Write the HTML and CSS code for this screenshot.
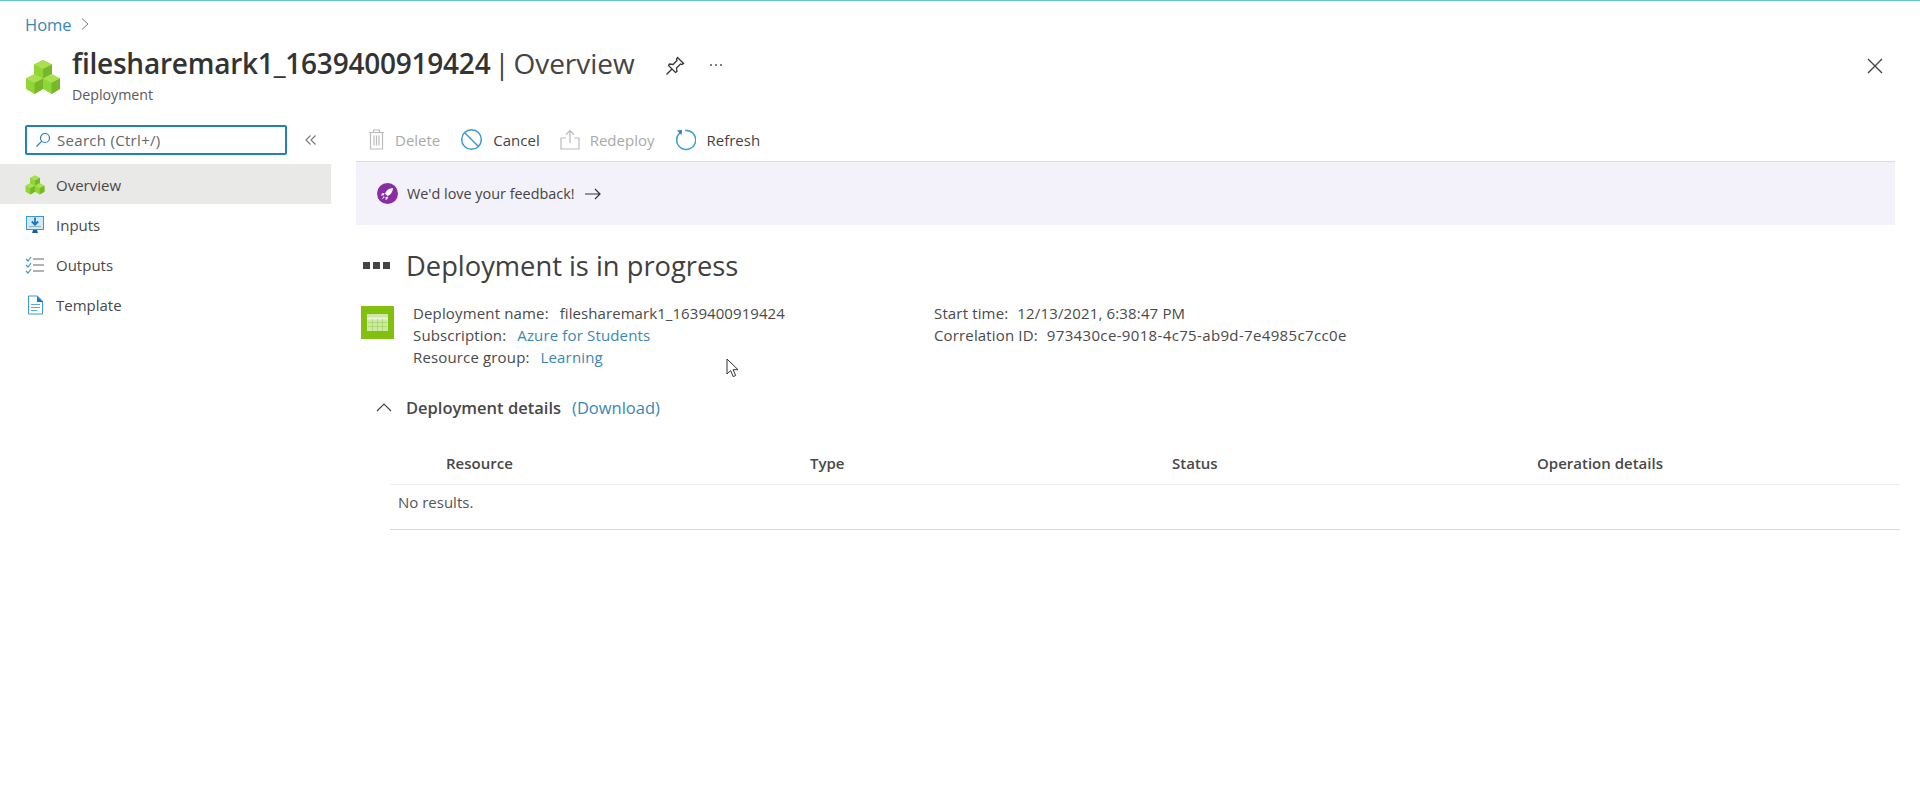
FILE: index.html
```html
<!DOCTYPE html>
<html lang="en">
<head>
<meta charset="utf-8">
<title>filesharemark1_1639400919424 | Overview</title>
<link rel="stylesheet" href="styles.css">
</head>
<body>
<div class="topline"></div>
<nav class="crumbs"><a class="link" href="#">Home</a>
<svg class="crumb-sep" width="10" height="14" viewBox="0 0 10 14"><path d="M2 1.500 8 7l-6 5.500" fill="none" stroke="#777" stroke-width="1"/></svg></nav>
<header class="blade-head">
<svg class="head-icon" width="36" height="36" viewBox="0 0 36 36">
<path d="M18 1 27 5.500v10L18 20 9 15.500v-10z" fill="#8fd636"/><path d="M18 1 27 5.500 18 10 9 5.500z" fill="#a8e04f"/><path d="M18 10v10l9-4.500v-10z" fill="#76b82a"/>
<path d="M9.500 15 18 19.500V30L9.500 35 1 30V19.500z" fill="#8fd636"/><path d="M9.500 15 18 19.500 9.500 24 1 19.500z" fill="#a8e04f"/><path d="M9.500 24V35l8.500-5V19.500z" fill="#76b82a"/>
<path d="M26.500 15 35 19.500V30l-8.500 5L18 30V19.500z" fill="#8fd636"/><path d="M26.500 15 35 19.500 26.500 24 18 19.500z" fill="#a8e04f"/><path d="M26.500 24V35l8.500-5V19.500z" fill="#76b82a"/>
</svg>
<div class="head-text">
<div class="title-row">
<h1 class="title"><strong class="title-name">filesharemark1_1639400919424</strong> <span class="title-sep">|</span> Overview</h1>
<svg class="pin" width="20" height="20" viewBox="0 0 20 20"><path d="M12.500 1.500 18.500 7.500 17 8.500 15.500 8 11.500 12l.5 3.500-1.500 1L3.500 9.500l1-1.500L8 8.500 12 4.500 11.500 3zM7 13 1.500 18.500" fill="none" stroke="#333" stroke-width="1.300"/></svg>
<span class="more"><i></i><i></i><i></i></span>
</div>
<div class="subtitle">Deployment</div>
</div>
<svg class="close" width="16" height="16" viewBox="0 0 16 16"><path d="M1 1 15 15M15 1 1 15" stroke="#444" stroke-width="1.400"/></svg>
</header>
<div class="blade-body">
<aside class="side">
<div class="search-row">
<div class="search">
<svg width="16" height="16" viewBox="0 0 16 16"><circle cx="10" cy="6" r="4.500" fill="none" stroke="#2b7cb8" stroke-width="1.200"/><path d="M6.800 9.200 1.500 14.500" stroke="#2b7cb8" stroke-width="1.200"/></svg>
<span>Search (Ctrl+/)</span>
</div>
<svg class="collapse" width="12" height="12" viewBox="0 0 12 12"><path d="M5.500 1.500 1 6l4.500 4.500M10.500 1.500 6 6l4.500 4.500" fill="none" stroke="#777" stroke-width="1.100"/></svg>
</div>
<ul class="menu">
<li class="menu-item active">
<svg width="20" height="20" viewBox="0 0 36 36">
<path d="M18 1 27 5.500v10L18 20 9 15.500v-10z" fill="#8fd636"/><path d="M18 1 27 5.500 18 10 9 5.500z" fill="#a8e04f"/><path d="M18 10v10l9-4.500v-10z" fill="#76b82a"/>
<path d="M9.500 15 18 19.500V30L9.500 35 1 30V19.500z" fill="#8fd636"/><path d="M9.500 15 18 19.500 9.500 24 1 19.500z" fill="#a8e04f"/><path d="M9.500 24V35l8.500-5V19.500z" fill="#76b82a"/>
<path d="M26.500 15 35 19.500V30l-8.500 5L18 30V19.500z" fill="#8fd636"/><path d="M26.500 15 35 19.500 26.500 24 18 19.500z" fill="#a8e04f"/><path d="M26.500 24V35l8.500-5V19.500z" fill="#76b82a"/>
</svg>
Overview</li>
<li class="menu-item">
<svg width="20" height="20" viewBox="0 0 20 20"><rect x="1.500" y="1.500" width="17" height="13" fill="#d3e9f7" stroke="#3b97d3"/><path d="M10 2.500v6.500M6.800 6.500 10 9.700l3.200-3.200" fill="none" stroke="#1b76bd" stroke-width="1.800"/><path d="M4 11.500h12" stroke="#9bb" stroke-width="1.200"/><path d="M8 15h4l1 3H7z" fill="#1b5f9e"/></svg>
Inputs</li>
<li class="menu-item">
<svg width="20" height="18" viewBox="0 0 20 18"><path d="M1 3l2 2 3-4M1 9l2 2 3-4M1 15l2 2 3-4" fill="none" stroke="#3b97d3" stroke-width="1.200"/><path d="M8 3h11M8 9h11M8 15h11" stroke="#999" stroke-width="1.300"/></svg>
Outputs</li>
<li class="menu-item">
<svg width="18" height="20" viewBox="0 0 18 20"><path d="M2.500 1h9l5 5v13h-14z" fill="#fff" stroke="#3b97d3"/><path d="M11 1l6 6h-6z" fill="#1b76bd"/><path d="M5 9.500h9M5 12.500h9M5 15.500h6" stroke="#5aa9dd" stroke-width="1.200"/></svg>
Template</li>
</ul>
</aside>
<main class="content">
<div class="toolbar">
<span class="tool off"><svg width="17" height="21" viewBox="0 0 17 21"><path d="M1 3.500h15M5.500 3.500V1h6v2.500M2.500 3.500V20h12V3.500M6 6.500v10M8.500 6.500v10M11 6.500v10" fill="none" stroke="#bbb" stroke-width="1.200"/></svg>Delete</span>
<span class="tool"><svg width="23" height="23" viewBox="0 0 23 23"><circle cx="11.500" cy="11.500" r="9.800" fill="none" stroke="#3d9dc9" stroke-width="1.500"/><path d="M4.500 4.500 18.500 18.500" stroke="#3d9dc9" stroke-width="1.500"/></svg>Cancel</span>
<span class="tool off"><svg width="20" height="21" viewBox="0 0 20 21"><path d="M6 9H1v11h18V9h-5M10 14V1.500M6 5.500l4-4 4 4" fill="none" stroke="#bbb" stroke-width="1.200"/></svg>Redeploy</span>
<span class="tool"><svg width="22" height="22" viewBox="0 0 22 22"><path d="M6 3.700A9.500 9.500 0 1 0 11 1.500" fill="none" stroke="#3d9dc9" stroke-width="1.500"/><path d="M3 1.500 8 1 7.500 6z" fill="#2b7cb8"/></svg>Refresh</span>
</div>
<div class="banner">
<svg width="21" height="21" viewBox="0 0 21 21"><circle cx="10.500" cy="10.500" r="10.500" fill="#8a2da5"/><path d="M16 5c-4 .3-6.500 2-8 5.500l2.500 2.500C14 11.500 15.700 9 16 5zM7.500 10 5 10.500l-1 2 3-.2zM11 13.500l-.5 2.500-2 1 .2-3zM6.800 13.200 4.500 16.500l3.300-2.300z" fill="#fff"/></svg>
<span>We'd love your feedback!</span>
<svg class="arrow" width="16" height="12" viewBox="0 0 16 12"><path d="M0 6h15M10 1l5 5-5 5" fill="none" stroke="#333" stroke-width="1.200"/></svg>
</div>
<div class="status-row">
<span class="dots"><i></i><i></i><i></i></span>
<h2 class="status">Deployment is in progress</h2>
</div>
<div class="summary">
<span class="dep-icon"><svg width="21" height="17" viewBox="0 0 21 17"><rect width="21" height="17" fill="#cfe8a8"/><path d="M0 4.500h21" stroke="#eaf5da" stroke-width="2"/><path d="M1 8.500h19M1 12.500h19M5.500 5v12M10.500 5v12M15.500 5v12" stroke="#a5d46a" stroke-width=".8"/></svg></span>
<dl class="info info-left">
<div><dt>Deployment name:</dt><dd class="name">filesharemark1_1639400919424</dd></div>
<div><dt>Subscription:</dt><dd><a class="link" href="#">Azure for Students</a></dd></div>
<div><dt>Resource group:</dt><dd><a class="link" href="#">Learning</a></dd></div>
</dl>
<dl class="info info-right">
<div><dt>Start time:</dt><dd>12/13/2021, 6:38:47 PM</dd></div>
<div><dt>Correlation ID:</dt><dd class="corr">973430ce-9018-4c75-ab9d-7e4985c7cc0e</dd></div>
</dl>
</div>
<div class="details-head">
<svg width="16" height="9" viewBox="0 0 16 9"><path d="M1 8 8 1l7 7" fill="none" stroke="#444" stroke-width="1.200"/></svg>
<strong class="details-title">Deployment details</strong>
<a class="link download" href="#">(Download)</a>
</div>
<div class="table">
<div class="table-head"><span>Resource</span><span>Type</span><span>Status</span><span>Operation details</span></div>
<div class="table-empty">No results.</div>
</div>
<svg class="cursor" width="13" height="20" viewBox="0 0 13 20"><path d="M1 1v15l3.600-3.400 2.600 6 2.500-1.100-2.600-5.800H12z" fill="#fff" stroke="#333" stroke-width="1"/></svg>
</main>
</div>
</body>
</html>
```
FILE: styles.css
```css
* { box-sizing: border-box; }
html, body { margin: 0; height: 100%; }
body {
  background: #fff;
  color: #484848;
  font-family: "Open Sans", "Noto Sans", "Liberation Sans", sans-serif;
  font-size: 15px;
  overflow: hidden;
}
.link { color: #3a87b5; text-decoration: none; }
.topline { height: 1px; background: #63c3cc; }
.crumbs { display: flex; align-items: center; gap: 8px; height: 26px; margin-top: 10px; padding-left: 25px; font-size: 16.500px; }
.blade-head { display: flex; align-items: flex-start; padding-left: 25px; padding-right: 37px; height: 81px; }
.head-icon { margin-top: 22px; flex: none; }
.head-text { margin-left: 11px; flex: 1; }
.title-row { display: flex; align-items: center; height: 36px; margin-top: 8px; }
.title { margin: 0; font-size: 28px; font-weight: 400; color: #444; white-space: nowrap; line-height: 36px; word-spacing: -3.500px; }
.title-name { font-weight: 600; color: #333; letter-spacing: -.23px; }
.pin { margin-left: 30px; margin-top: 6px; }
.more { display: flex; gap: 3px; margin-left: 25px; margin-top: 4px; }
.more i { width: 2px; height: 2px; background: #555; border-radius: 50%; }
.subtitle { font-size: 14.200px; line-height: 20px; margin-top: 4px; color: #5a5a5a; }
.close { margin-top: 21px; }
.blade-body { display: flex; flex: 1; }
.side { width: 331px; flex: none; }
.search-row { display: flex; align-items: center; height: 38px; padding-left: 25px; margin-top: 3px; margin-bottom: 5px; gap: 18px; }
.search { display: flex; align-items: center; gap: 6px; width: 262px; height: 30px; border: 2px solid #1f82b8; border-radius: 2px; padding-left: 8px; letter-spacing: .3px; color: #666; }
.collapse { flex: none; }
.menu { list-style: none; margin: 0; padding: 0; }
.menu-item { display: flex; align-items: center; height: 40px; padding-left: 25px; padding-top: 2px; gap: 11px; }
.menu-item svg { width: 20px; flex: none; }
.menu-item.active { background: #e9e9e8; }
.content { flex: 1; position: relative; padding-left: 25px; padding-right: 20px; }
.toolbar { display: flex; align-items: center; height: 43px; padding-left: 12px; gap: 20px; color: #444; }
.tool { display: flex; align-items: center; gap: 10px; }
.tool.off { color: #a9a9a9; }
.banner { display: flex; align-items: center; height: 64px; background: #f3f1f9; border-top: 1px solid #dcdcdc; padding-left: 21px; gap: 9px; color: #444; margin-right: 5px; font-size: 14.400px; }
.arrow { margin-left: 1px; }
.status-row { display: flex; align-items: center; height: 40px; margin-top: 20px; padding-left: 7px; gap: 16px; }
.dots { display: flex; gap: 3px; }
.dots i { width: 7px; height: 7px; background: #444; }
.status { margin: 0; font-size: 27.300px; font-weight: 400; color: #404040; }
.summary { display: flex; margin-top: 17px; padding-left: 5px; }
.dep-icon { display: flex; align-items: center; justify-content: center; width: 33px; height: 33px; margin-top: 4px; background: #82c010; flex: none; }
.info { margin: 0; line-height: 22px; margin-left: 19px; letter-spacing: .15px; color: #4a4a4a; }
.info-left { width: 502px; }
.info div { display: flex; gap: 11px; white-space: nowrap; }
.info-right div { gap: 9px; }
.info dt, .info dd { margin: 0; }
.info .name { letter-spacing: .07px; }
.info .corr { letter-spacing: .35px; }
.details-head { display: flex; align-items: center; height: 26px; margin-top: 26px; padding-left: 20px; }
.details-title { margin-left: 14px; font-size: 16.500px; font-weight: 600; }
.download { margin-left: 11px; font-size: 16.500px; }
.table { margin-top: 21px; margin-left: 34px; border-bottom: 1px solid #d8d8d8; }
.table-head { display: grid; grid-template-columns: 364px 362px 365px 1fr; height: 44px; align-items: center; padding-left: 56px; border-bottom: 1px solid #eee; font-weight: 600; }
.table-empty { height: 44px; display: flex; align-items: center; padding-left: 8px; padding-bottom: 10px; color: #555; }
.cursor { position: absolute; left: 395px; top: 240px; }
```
